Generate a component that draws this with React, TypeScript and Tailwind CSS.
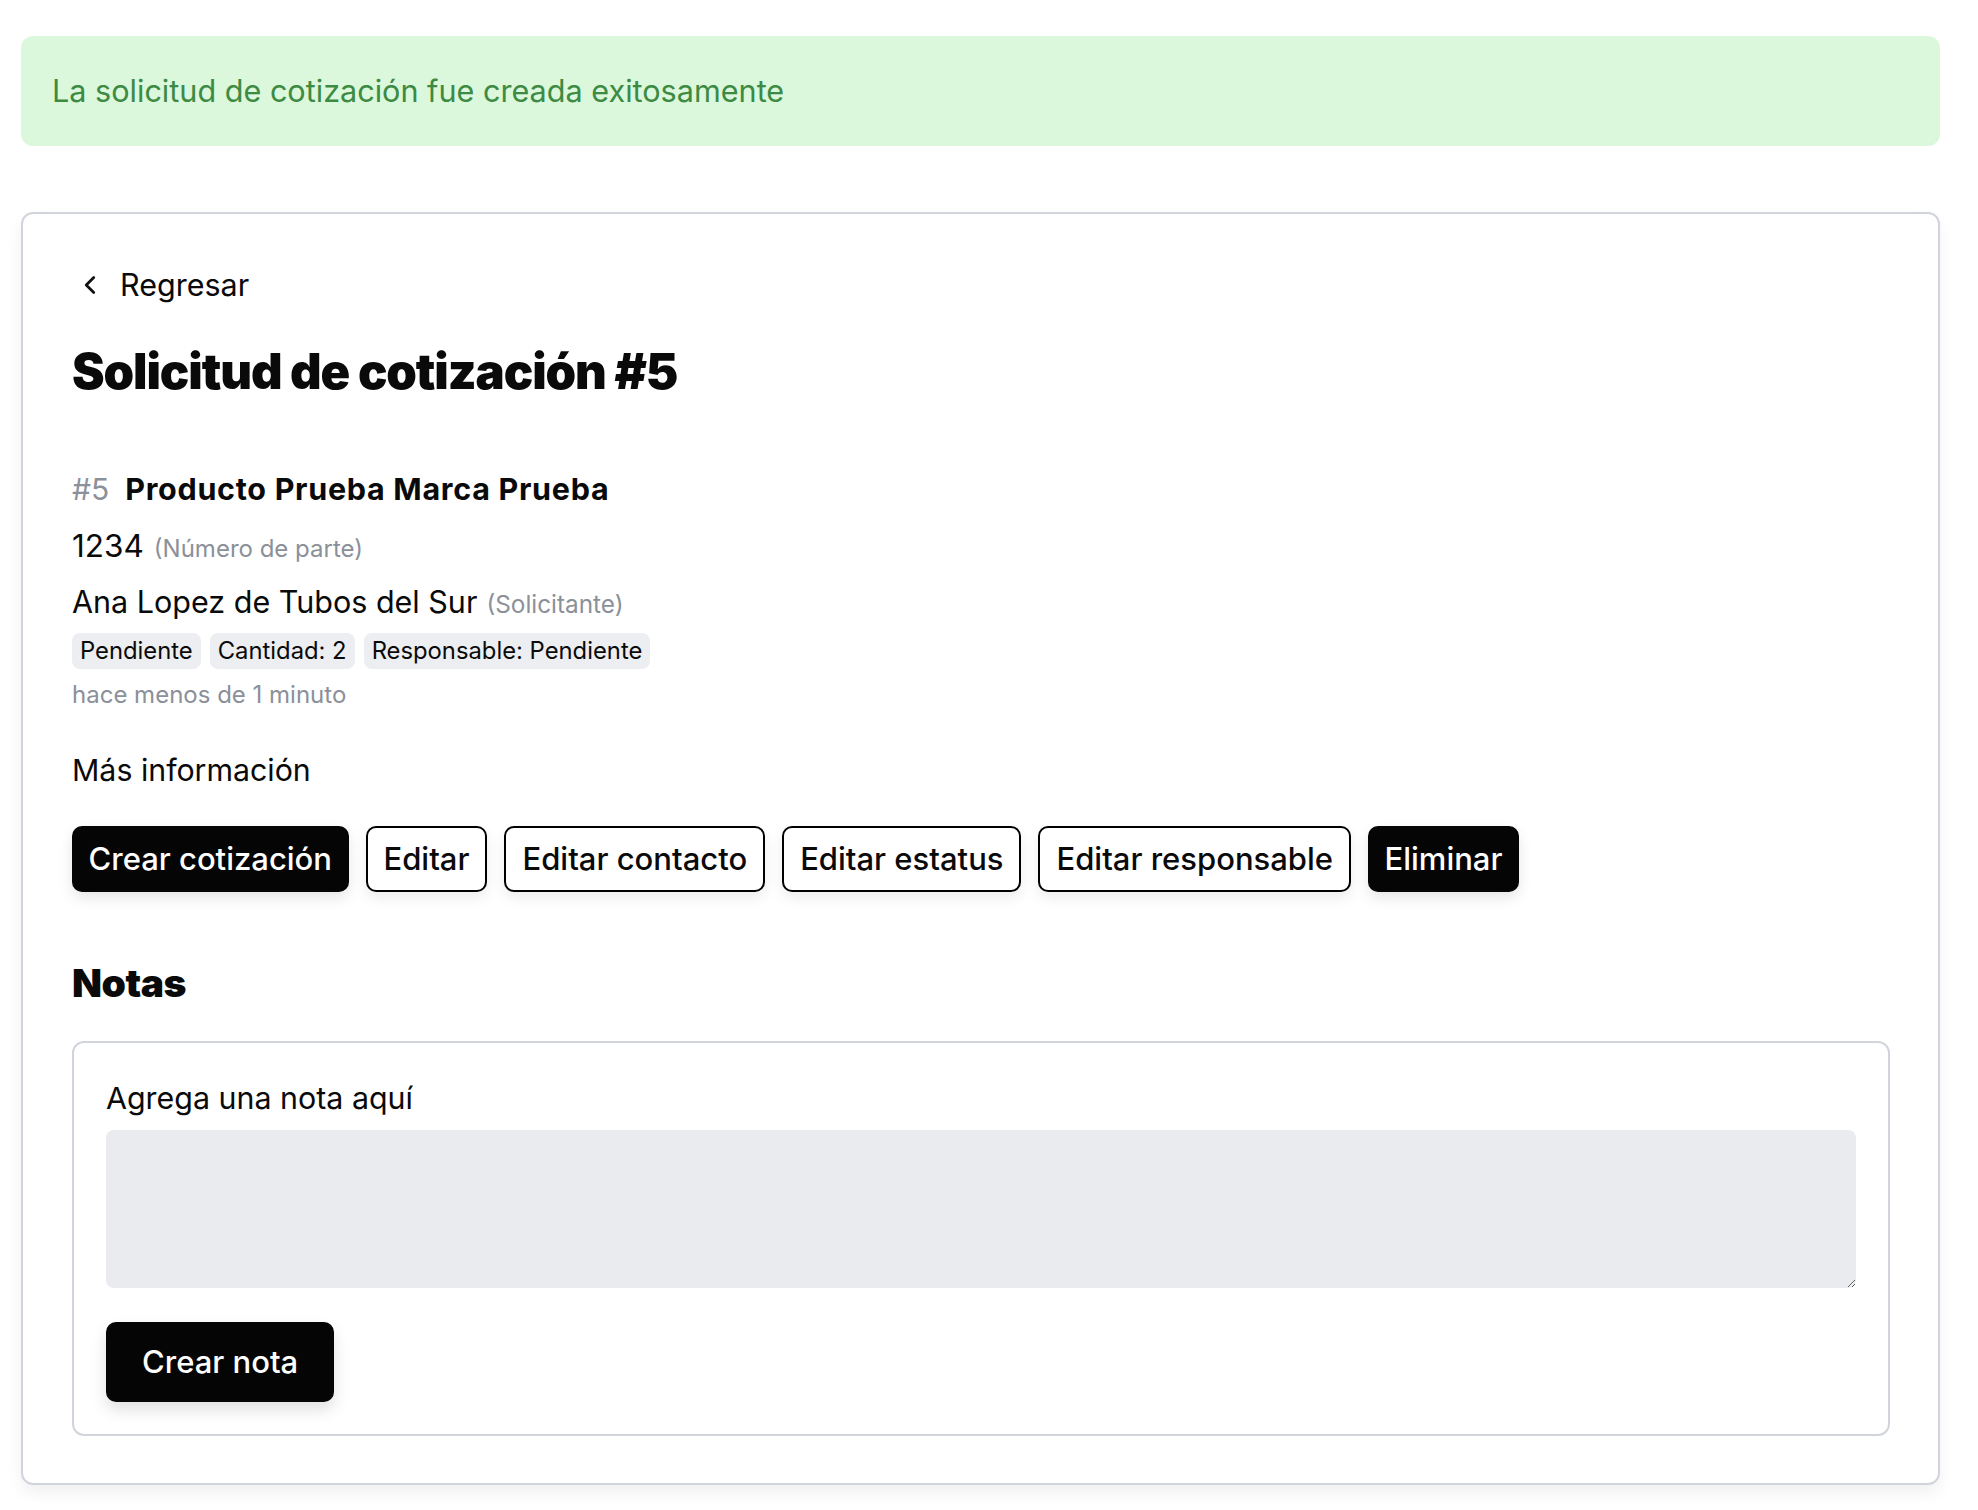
import React from "react";

function ChevronLeft() {
  return (
    <svg width="30" height="30" viewBox="0 0 24 24" fill="none" stroke="#111" strokeWidth="2.2" strokeLinecap="round" strokeLinejoin="round">
      <path d="m15 18-6-6 6-6" />
    </svg>
  );
}

export default function App() {
  const outlineBtn =
    "h-[66px] px-[16px] rounded-[10px] border-2 border-black bg-white text-[#0a0a0a] text-[31px] font-medium shadow-[0_6px_14px_rgba(0,0,0,0.08)] flex items-center";
  const solidBtn =
    "h-[66px] px-[16.5px] rounded-[10px] bg-[#050505] text-white text-[31px] font-medium shadow-[0_6px_14px_rgba(0,0,0,0.1)] flex items-center";
  return (
    <div className="min-h-screen bg-white pl-[21px] pr-[38px] pt-[36px] pb-[25px] text-[#0a0a0a]" style={{ fontFamily: "Inter, 'Noto Sans', sans-serif" }}>
      <div className="h-[110px] rounded-[12px] bg-[#dbf7dc] flex items-center pl-[31px]">
        <span className="text-[30.6px] text-[#3d8a43] leading-[36px]">La solicitud de cotización fue creada exitosamente</span>
      </div>

      <div className="mt-[66px] rounded-[12px] border-2 border-[#d1d5db] bg-white shadow-[0_8px_16px_rgba(0,0,0,0.06)] pl-[49px] pr-[48px] pt-[51px] pb-[47px]">
        <div className="flex items-center h-[40px]">
          <span className="ml-[3px] flex"><ChevronLeft /></span>
          <span className="ml-[15px] text-[30.5px] leading-[40px]">Regresar</span>
        </div>

        <h1 className="mt-[37px] text-[49px] leading-[60px] font-black tracking-[-1.1px]">Solicitud de cotización #5</h1>

        <div className="mt-[67px] flex items-baseline h-[40px]">
          <span className="text-[30px] leading-[40px] text-[#8b9099]">#5</span>
          <span className="ml-[16px] text-[30.5px] leading-[40px] font-bold tracking-[0.7px]">Producto Prueba Marca Prueba</span>
        </div>

        <div className="mt-[17px] flex items-baseline h-[40px]">
          <span className="text-[31.5px] leading-[40px]">1234</span>
          <span className="ml-[10px] text-[24px] leading-[40px] text-[#8b9099]">(Número de parte)</span>
        </div>

        <div className="mt-[16px] flex items-baseline h-[40px]">
          <span className="text-[30.5px] leading-[40px]">Ana Lopez de Tubos del Sur</span>
          <span className="ml-[9px] text-[24.3px] leading-[40px] text-[#8b9099]">(Solicitante)</span>
        </div>

        <div className="mt-[11px] flex gap-[9px]">
          <span className="h-[36px] px-[8px] rounded-[8px] bg-[#eceef1] text-[23.8px] leading-[36px]">Pendiente</span>
          <span className="h-[36px] px-[8px] rounded-[8px] bg-[#eceef1] text-[23.8px] leading-[36px]">Cantidad: 2</span>
          <span className="h-[36px] px-[8px] rounded-[8px] bg-[#eceef1] text-[23.8px] leading-[36px]">Responsable: Pendiente</span>
        </div>

        <div className="mt-[10px] text-[24px] leading-[32px] text-[#8b9099]">hace menos de 1 minuto</div>

        <div className="mt-[39px] text-[30.3px] leading-[40px]">Más información</div>

        <div className="mt-[36px] flex gap-[17px]">
          <button className={solidBtn}>Crear cotización</button>
          <button className={outlineBtn}>Editar</button>
          <button className={outlineBtn}>Editar contacto</button>
          <button className={outlineBtn}>Editar estatus</button>
          <button className={outlineBtn}>Editar responsable</button>
          <button className={solidBtn}>Eliminar</button>
        </div>

        <h2 className="mt-[67px] text-[39px] leading-[48px] font-black tracking-[-0.5px]">Notas</h2>

        <div className="mt-[34px] rounded-[12px] border-2 border-[#d1d5db] pl-[32px] pr-[32px] pt-[35px] pb-[32px]">
          <div className="text-[30.4px] leading-[40px]">Agrega una nota aquí</div>
          <textarea className="mt-[12px] block w-full h-[158px] rounded-[8px] bg-[#eaebee] outline-none p-3 text-[24px]" />
          <button className="mt-[34px] h-[80px] px-[36px] rounded-[10px] bg-[#050505] text-white text-[31px] font-medium shadow-[0_8px_16px_rgba(0,0,0,0.12)]">Crear nota</button>
        </div>
      </div>
    </div>
  );
}
